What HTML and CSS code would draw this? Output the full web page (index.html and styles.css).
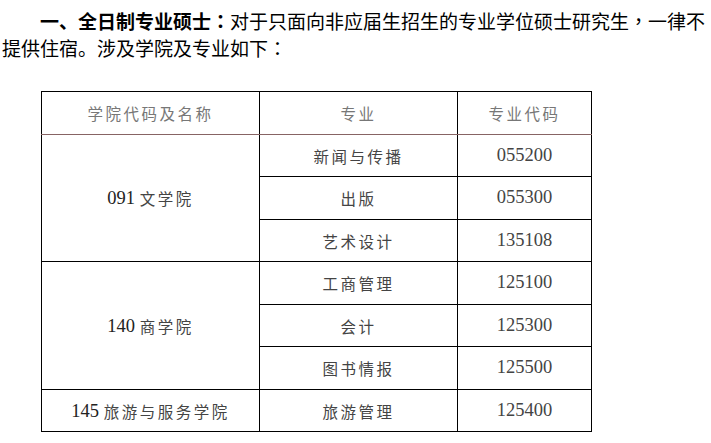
FILE: index.html
```html
<!DOCTYPE html>
<html lang="zh-CN">
<head>
<meta charset="utf-8">
<link rel="stylesheet" href="styles.css">
</head>
<body>
<p class="intro"><strong>一、全日制专业硕士<span class="punc" lang="zh-TW">：</span></strong>对于只面向非应届生招生的专业学位硕士研究生<span class="punc" lang="zh-TW">，</span>一律不提供住宿。涉及学院及专业如下<span class="punc" lang="zh-TW">：</span></p>
<table class="majors">
  <colgroup>
    <col class="c1"><col class="c2"><col class="c3">
  </colgroup>
  <thead>
    <tr class="head">
      <th><span class="zh">学院代码及名称</span></th>
      <th><span class="zh">专业</span></th>
      <th><span class="zh">专业代码</span></th>
    </tr>
  </thead>
  <tbody>
    <tr>
      <td rowspan="3"><span class="num">091 </span><span class="zh">文学院</span></td>
      <td><span class="zh">新闻与传播</span></td>
      <td class="num">055200</td>
    </tr>
    <tr>
      <td><span class="zh">出版</span></td>
      <td class="num">055300</td>
    </tr>
    <tr>
      <td><span class="zh">艺术设计</span></td>
      <td class="num">135108</td>
    </tr>
    <tr>
      <td rowspan="3"><span class="num">140 </span><span class="zh">商学院</span></td>
      <td><span class="zh">工商管理</span></td>
      <td class="num">125100</td>
    </tr>
    <tr>
      <td><span class="zh">会计</span></td>
      <td class="num">125300</td>
    </tr>
    <tr>
      <td><span class="zh">图书情报</span></td>
      <td class="num">125500</td>
    </tr>
    <tr>
      <td><span class="num">145 </span><span class="zh">旅游与服务学院</span></td>
      <td><span class="zh">旅游管理</span></td>
      <td class="num">125400</td>
    </tr>
  </tbody>
</table>
</body>
</html>
```
FILE: styles.css
```css
html, body {
  margin: 0;
  padding: 0;
  background: #fff;
}
body {
  padding: 0 2px;
  font-family: "Noto Sans CJK SC", "Noto Sans", sans-serif;
  color: #000;
}
.intro {
  margin: 7px 0 0 0;
  font-size: 19px;
  line-height: 27px;
  text-indent: 38px;
}
.intro strong {
  font-weight: 700;
}
.punc {
  font-family: "Noto Sans CJK TC", "Noto Sans CJK SC", sans-serif;
}
.majors {
  margin: 30px 0 0 39px;
  border-collapse: collapse;
  table-layout: fixed;
  width: 550px;
}
.c1 { width: 218px; }
.c2 { width: 198px; }
.c3 { width: 134px; }
.majors th,
.majors td {
  border: 1px solid #000;
  padding: 0;
  text-align: center;
  vertical-align: middle;
  font-weight: 400;
  color: #444;
  font-family: "Liberation Serif", "Noto Sans CJK SC", serif;
  font-size: 18.5px;
}
.majors tr {
  height: 42.5px;
}
.majors .head th {
  color: #777;
  border-bottom: 1px solid #876464;
}
.zh {
  font-family: "Noto Sans CJK SC", sans-serif;
  font-size: 15.5px;
  letter-spacing: 2.5px;
  position: relative;
  top: 1px;
}
.num {
  color: #222;
}
```
